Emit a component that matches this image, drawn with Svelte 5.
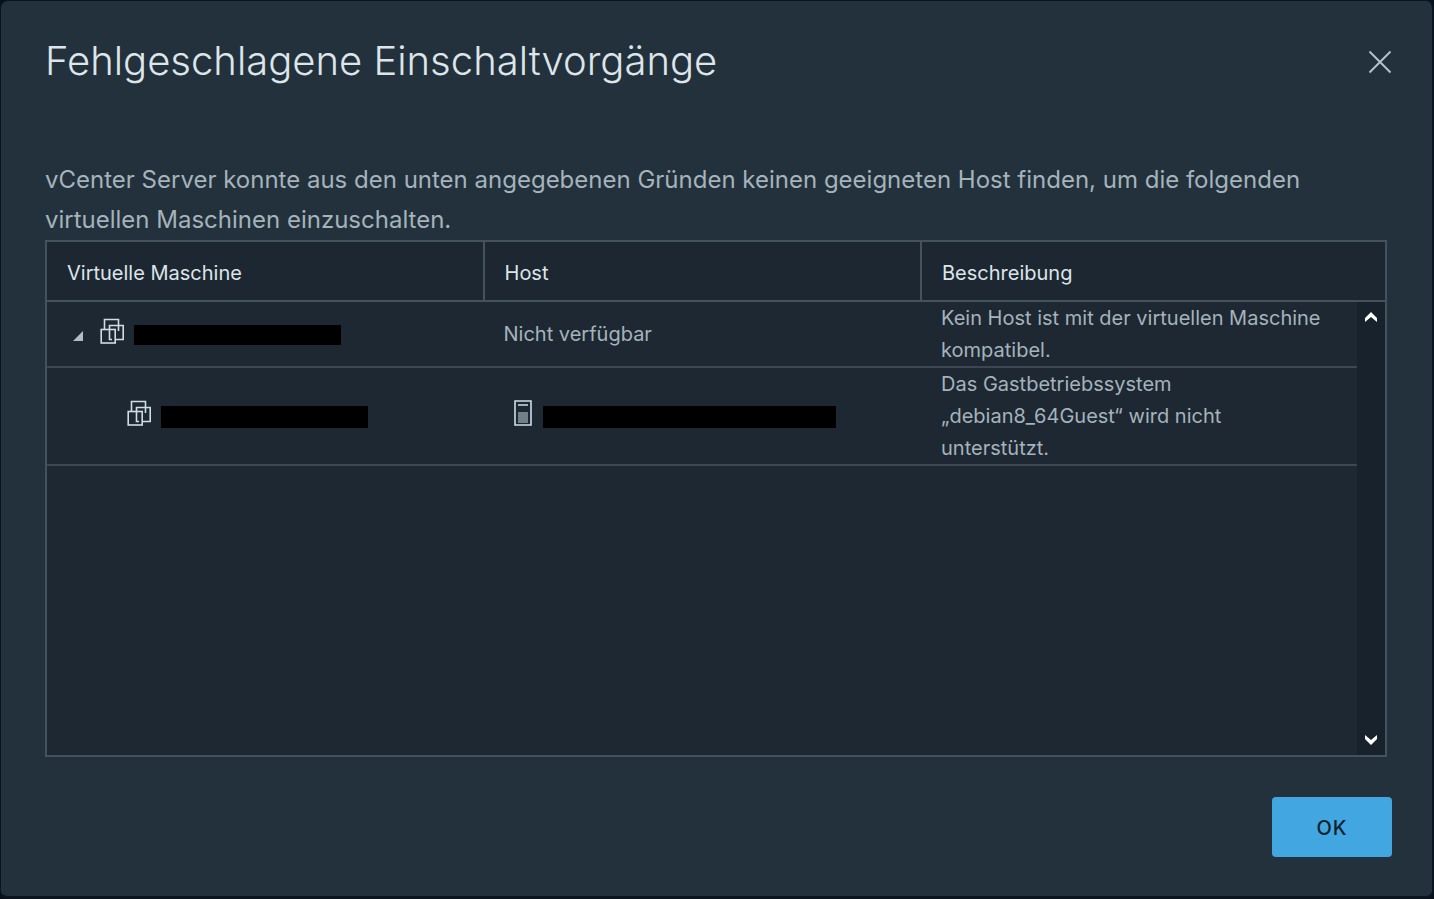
<script>
  const headers = ['Virtuelle Maschine', 'Host', 'Beschreibung'];
  let expanded = $state(true);
</script>

{#snippet vmIcon()}
  <svg class="vm" viewBox="0 0 24 26" aria-hidden="true">
    <path d="M4.5 11V1.5H18.5V13M9.5 11V7.5H23.2V21.5H15.5M9.5 11V21.5H12" />
    <rect x="1.2" y="11.5" width="14" height="13.5" />
  </svg>
{/snippet}

<div class="dialog" role="dialog" aria-labelledby="title">
  <header>
    <h1 id="title">Fehlgeschlagene Einschaltvorgänge</h1>
    <button class="close" aria-label="Schließen">
      <svg viewBox="0 0 24 24" aria-hidden="true"><path d="M1.5 1.5L22.5 22.5M22.5 1.5L1.5 22.5" /></svg>
    </button>
  </header>

  <p>vCenter Server konnte aus den unten angegebenen Gründen keinen geeigneten Host finden, um die folgenden virtuellen Maschinen einzuschalten.</p>

  <div class="datagrid">
    <table>
      <thead>
        <tr>
          {#each headers as label}
            <th scope="col">{label}</th>
          {/each}
        </tr>
      </thead>
      <tbody>
        <tr>
          <td>
            <div class="entry parent">
              <button class="toggle" aria-label="Zeile umschalten" aria-expanded={expanded} onclick={() => (expanded = !expanded)}>
                <svg viewBox="0 0 10 10" aria-hidden="true"><path d="M10 0V10H0Z" /></svg>
              </button>
              {@render vmIcon()}
              <span class="redacted"></span>
            </div>
          </td>
          <td>Nicht verfügbar</td>
          <td class="description">Kein Host ist mit der virtuellen Maschine kompatibel.</td>
        </tr>
        {#if expanded}
          <tr>
            <td>
              <div class="entry child">
                {@render vmIcon()}
                <span class="redacted tall"></span>
              </div>
            </td>
            <td>
              <div class="entry host">
                <svg class="server" viewBox="0 0 18 26" aria-hidden="true">
                  <rect class="fill" x="4" y="12" width="10" height="11" />
                  <path d="M1 1H17V25H1ZM4 5H14" />
                </svg>
                <span class="redacted tall wide"></span>
              </div>
            </td>
            <td class="description">Das Gastbetriebssystem „debian8_64Guest“ wird nicht unterstützt.</td>
          </tr>
        {/if}
      </tbody>
    </table>
    <div class="scrollbar">
      <button aria-label="Nach oben"><svg viewBox="0 0 12 10" aria-hidden="true"><path d="M0 6L6 0L12 6V10L6 5L0 10Z" /></svg></button>
      <button aria-label="Nach unten"><svg viewBox="0 0 12 10" aria-hidden="true"><path d="M0 0L6 5L12 0V4L6 10L0 4Z" /></svg></button>
    </div>
  </div>

  <footer><button class="ok">OK</button></footer>
</div>

<style>
  :global(body) {
    margin: 0;
    background: #08111b;
  }

  .dialog {
    box-sizing: border-box;
    min-height: 100vh;
    display: flex;
    flex-direction: column;
    padding: 32px 40px 39px 44px;
    border: solid #0b1520;
    border-width: 1px 2px 3px 1px;
    border-radius: 8px;
    background: #22313b;
    color: #a5b3bc;
    font-family: Inter, "Open Sans", sans-serif;
    font-size: 20px;
    line-height: 32px;
  }

  header {
    display: flex;
    align-items: center;
    justify-content: space-between;
    height: 56px;
  }

  h1 {
    margin: 0;
    color: #dde5ea;
    font-size: 40px;
    font-weight: 300;
    line-height: 56px;
  }

  button {
    padding: 0;
    border: 0;
    background: none;
    font: inherit;
    cursor: pointer;
  }

  svg {
    display: block;
    flex: none;
  }

  .close {
    padding-top: 2px;
  }

  .close svg {
    width: 24px;
    height: 24px;
    fill: none;
    stroke: #b3c1ca;
    stroke-width: 2;
  }

  p {
    margin: 71px 0 0;
    font-size: 24px;
    line-height: 40px;
  }

  .datagrid {
    flex: 1;
    display: grid;
    grid-template: 60px 1fr / 1fr 28px;
    margin-right: 5px;
    border: 2px solid #44525e;
    background: #1d2832;
  }

  table {
    grid-area: 1 / 1 / 3 / 3;
    align-self: start;
    width: 100%;
    table-layout: fixed;
    border-collapse: separate;
    border-spacing: 0;
  }

  th {
    box-sizing: border-box;
    height: 60px;
    padding: 4px 20px 0 20px;
    border-bottom: 2px solid #44525e;
    background: #1c2731;
    color: #dde5ea;
    font-weight: 400;
    text-align: left;
  }

  th:not(:last-child) {
    width: 32.7%;
    border-right: 2px solid #44525e;
  }

  td {
    padding: 0 19px;
    border-bottom: 2px solid #3b4853;
  }

  td.description {
    padding-right: 52px;
  }

  .entry {
    display: flex;
    align-items: center;
  }

  .parent {
    padding-left: 7px;
  }

  .child {
    padding-left: 61px;
  }

  .host {
    padding-left: 10px;
  }

  .toggle {
    margin: 4px 17px 0 0;
  }

  .toggle svg {
    width: 10px;
    height: 10px;
    fill: #b3bcc5;
  }

  .vm,
  .server {
    height: 26px;
    margin-bottom: 6px;
    fill: none;
    stroke: #d0dde5;
    stroke-width: 1.6;
  }

  .vm {
    width: 24px;
    margin-right: 10px;
  }

  .server {
    width: 18px;
    margin-right: 11px;
  }

  .server .fill {
    fill: #71808b;
    stroke: none;
  }

  .redacted {
    width: 207px;
    height: 20px;
    margin-top: 2px;
    background: #000;
  }

  .redacted.tall {
    height: 22px;
  }

  .redacted.wide {
    width: 293px;
  }

  .scrollbar {
    grid-area: 2 / 2;
    display: flex;
    flex-direction: column;
    justify-content: space-between;
    align-items: center;
    padding: 10px 0;
    background: #17222d;
  }

  .scrollbar svg {
    width: 12px;
    height: 10px;
    fill: #fff;
  }

  footer {
    display: flex;
    justify-content: flex-end;
    margin-top: 40px;
  }

  .ok {
    width: 120px;
    height: 60px;
    padding-top: 2px;
    border-radius: 4px;
    background: #42a7e0;
    color: #10222e;
    font-weight: 500;
    letter-spacing: 1px;
  }
</style>
